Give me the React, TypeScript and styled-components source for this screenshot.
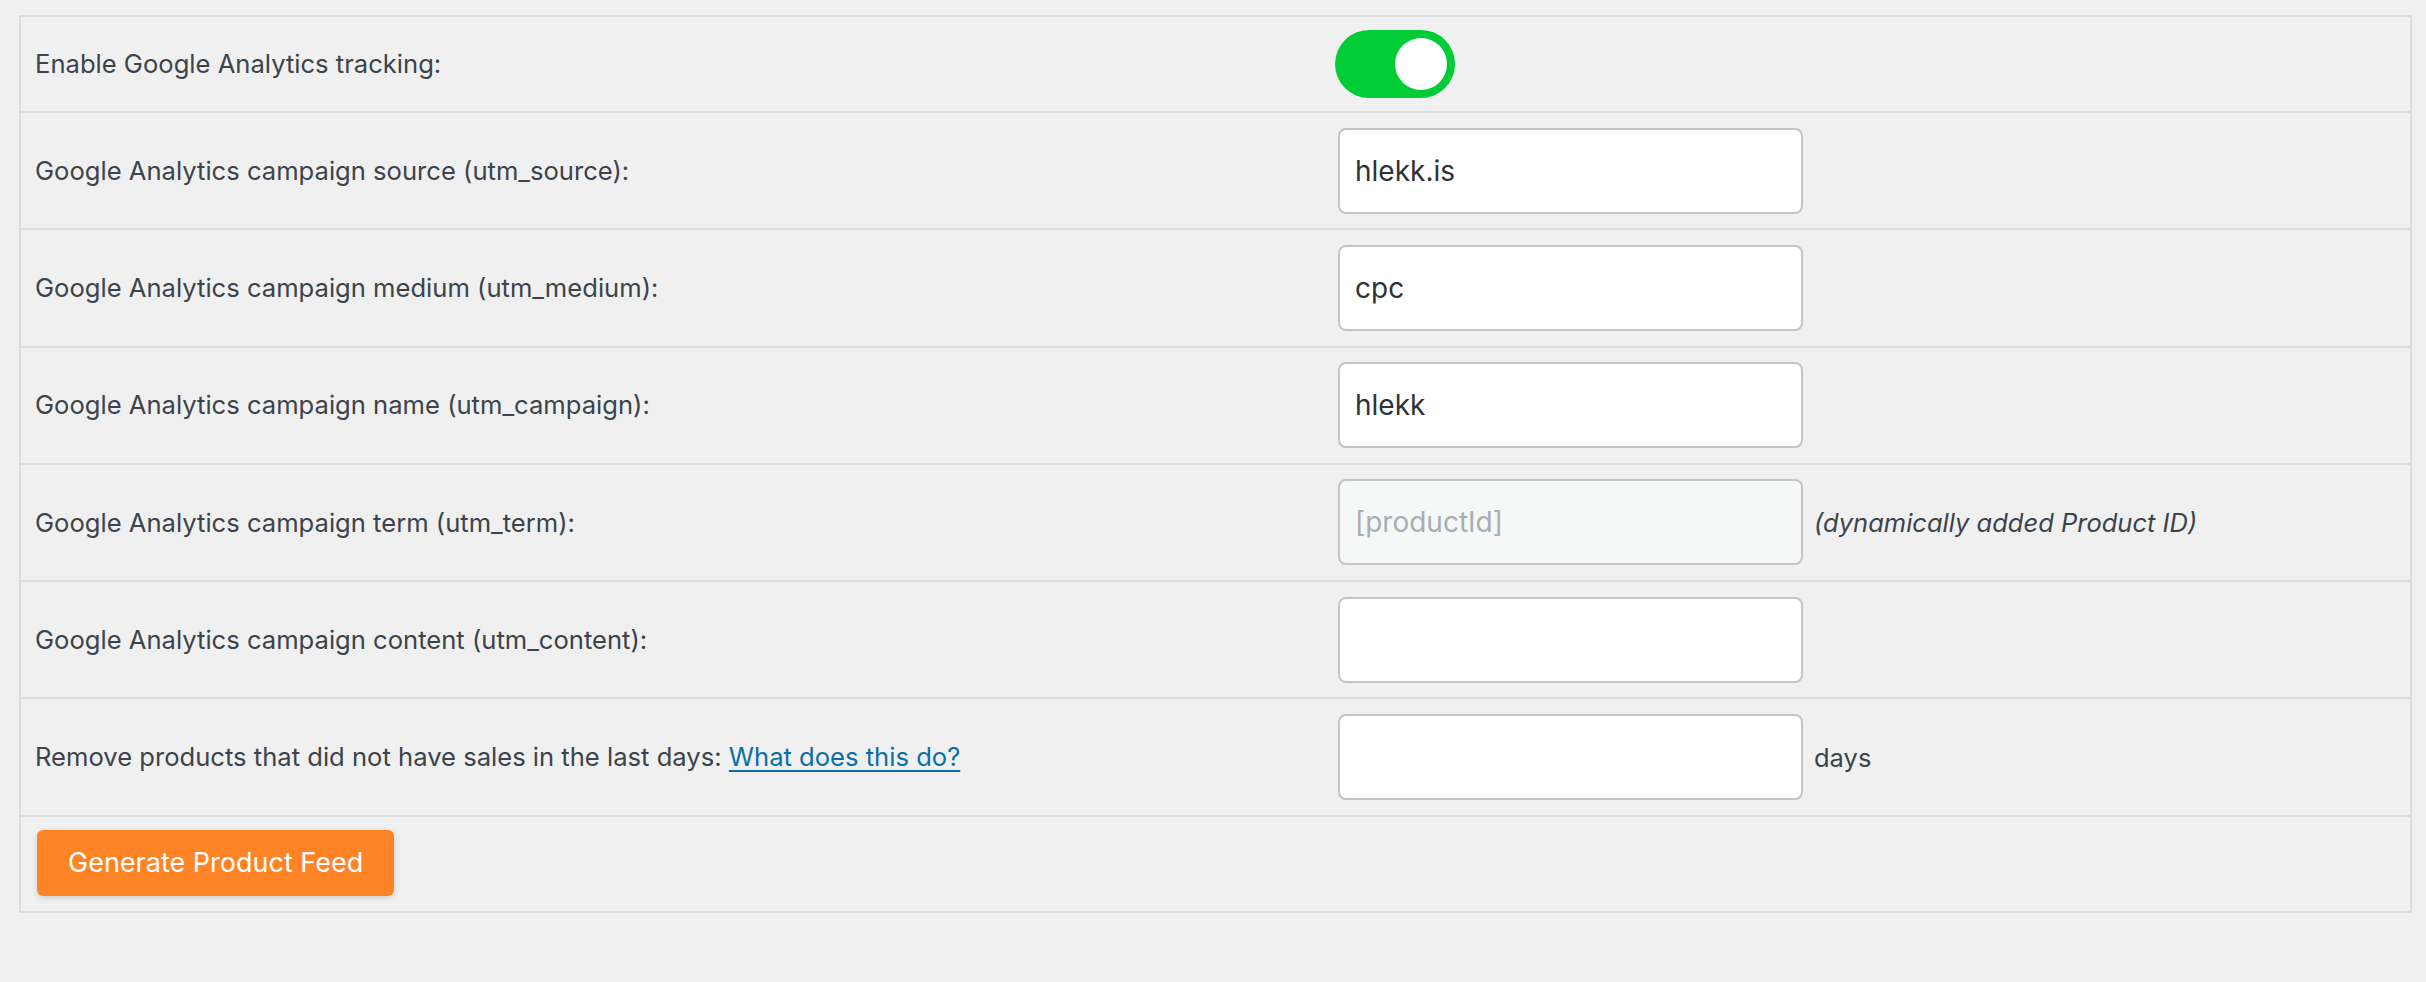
import React from "react";
import styled, { createGlobalStyle } from "styled-components";

const Global = createGlobalStyle`
  html, body { margin: 0; padding: 0; background: #f0f0f1; }
  body { font-family: Inter, "Noto Sans", "Liberation Sans", sans-serif; color: #3c434a; }
`;

const Page = styled.div`
  padding: 15px 14px 40px 19px;
`;

const Table = styled.div`
  border: 2px solid #dcdcde;
  background: #f0f0f0;
  display: flex;
  flex-direction: column;
`;

const Row = styled.div<{ $last?: boolean }>`
  display: grid;
  grid-template-columns: 1317px 1fr;
  align-items: center;
  border-bottom: ${(p) => (p.$last ? "none" : "2px solid #dcdcde")};
`;

const Label = styled.div`
  padding: 0 14px;
  font-size: 25.6px;
  line-height: 1.4;
`;

const Field = styled.div<{ $pad?: number }>`
  display: flex;
  align-items: center;
  gap: 11px;
  padding: ${(p) => p.$pad ?? 14.65}px 0;
  font-size: 25.5px;
`;

const Input = styled.input`
  box-sizing: border-box;
  width: 465px;
  height: 86px;
  border: 2px solid #c3c4c7;
  border-radius: 8px;
  background: #fff;
  padding: 0 15px;
  font-family: inherit;
  font-size: 28px;
  color: #2c3338;
  outline: none;
  &:disabled {
    background: #f6f7f7;
  }
  &::placeholder {
    color: #a7aeb5;
  }
`;

const Hint = styled.em`
  font-style: italic;
  color: #3c434a;
`;

const Link = styled.a`
  color: #0a6fa9;
  text-decoration: underline;
  text-decoration-thickness: 2px;
  text-underline-offset: 4px;
`;

const Toggle = styled.span<{ $on: boolean }>`
  box-sizing: border-box;
  display: inline-flex;
  align-items: center;
  justify-content: ${(p) => (p.$on ? "flex-end" : "flex-start")};
  width: 120px;
  height: 68px;
  padding: 0 8px;
  border-radius: 34px;
  margin-left: -3px;
  background: ${(p) => (p.$on ? "#00cc36" : "#c3c4c7")};
`;

const Knob = styled.span`
  width: 52px;
  height: 52px;
  border-radius: 50%;
  background: #fff;
`;

const ButtonCell = styled.div`
  padding: 13px 16px 15px;
`;

const Button = styled.button`
  background: #ff8426;
  color: #fff;
  border: none;
  border-radius: 6px;
  height: 66px;
  padding: 0 31px;
  font-family: inherit;
  font-size: 27px;
  box-shadow: 0 2px 6px rgba(0, 0, 0, 0.14);
  cursor: pointer;
`;

const rows = [
  { label: "Google Analytics campaign source (utm_source):", value: "hlekk.is" },
  { label: "Google Analytics campaign medium (utm_medium):", value: "cpc" },
  { label: "Google Analytics campaign name (utm_campaign):", value: "hlekk" },
];

export default function App() {
  return (
    <>
      <Global />
      <Page>
        <Table>
          <Row>
            <Label>Enable Google Analytics tracking:</Label>
            <Field $pad={13}>
              <Toggle $on>
                <Knob />
              </Toggle>
            </Field>
          </Row>
          {rows.map((r) => (
            <Row key={r.label}>
              <Label>{r.label}</Label>
              <Field>
                <Input defaultValue={r.value} />
              </Field>
            </Row>
          ))}
          <Row>
            <Label>Google Analytics campaign term (utm_term):</Label>
            <Field>
              <Input disabled placeholder="[productId]" />
              <Hint>(dynamically added Product ID)</Hint>
            </Field>
          </Row>
          <Row>
            <Label>Google Analytics campaign content (utm_content):</Label>
            <Field>
              <Input />
            </Field>
          </Row>
          <Row>
            <Label>
              Remove products that did not have sales in the last days:{" "}
              <Link href="#">What does this do?</Link>
            </Label>
            <Field>
              <Input />
              <span>days</span>
            </Field>
          </Row>
          <Row $last>
            <ButtonCell>
              <Button>Generate Product Feed</Button>
            </ButtonCell>
          </Row>
        </Table>
      </Page>
    </>
  );
}
